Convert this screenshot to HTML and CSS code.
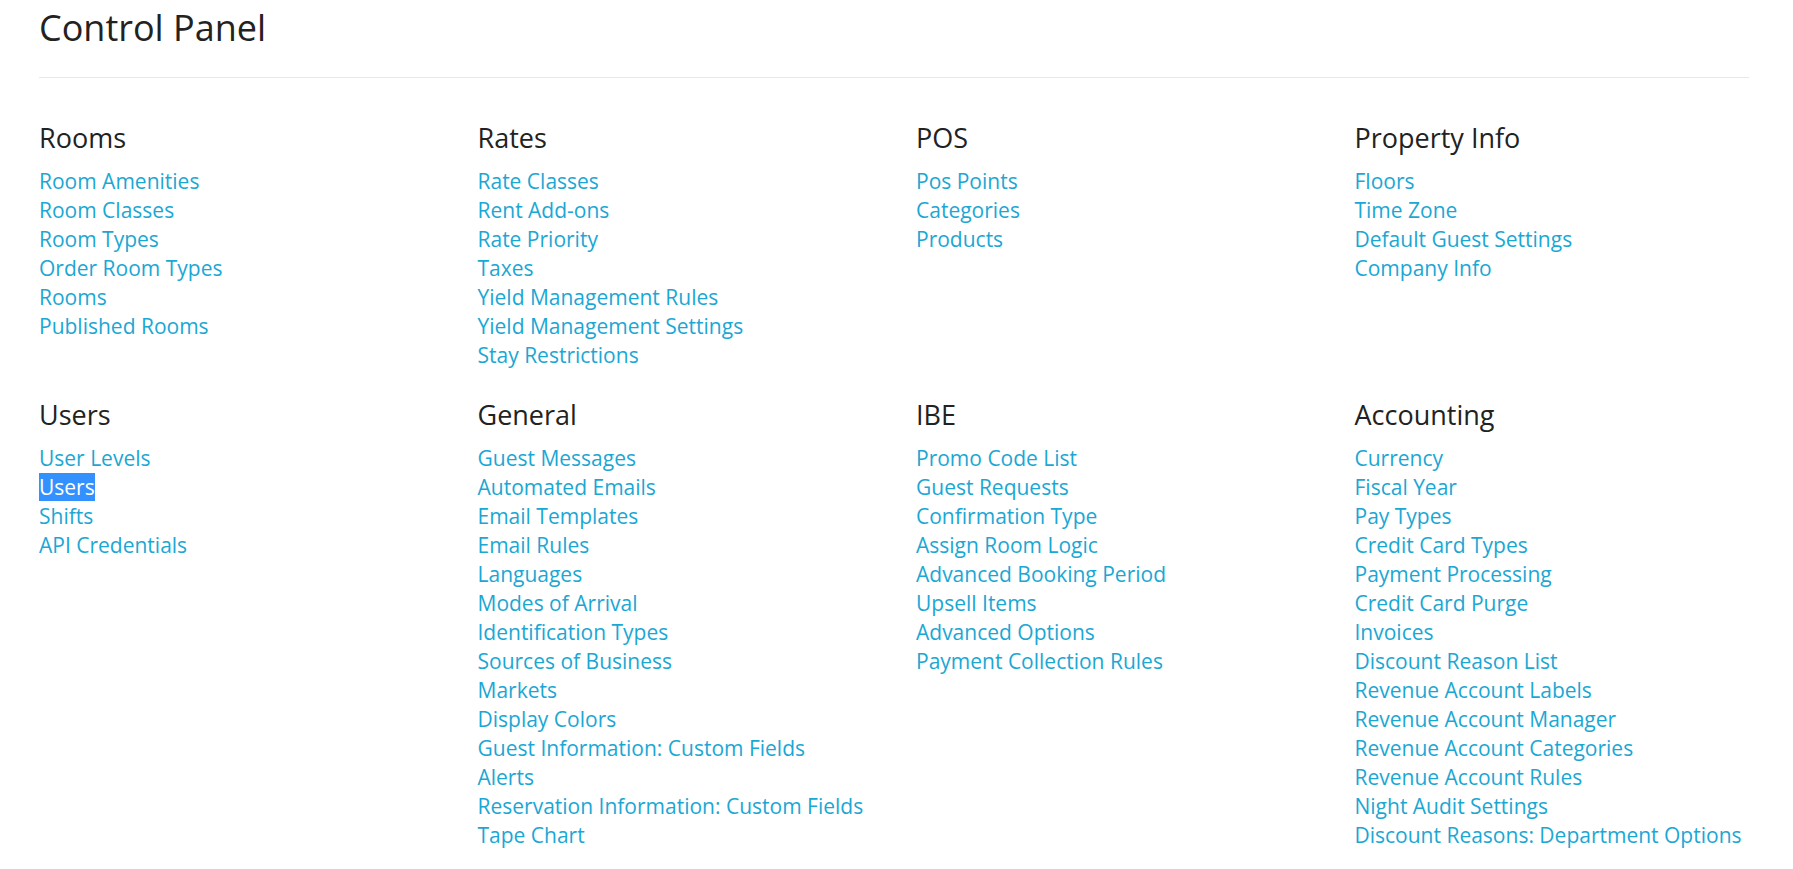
FILE: index.html
```html
<!DOCTYPE html>
<html lang="en">
<head>
<meta charset="utf-8">
<title>Control Panel</title>
<link rel="stylesheet" href="styles.css">
</head>
<body>
<div class="page">
  <h1 class="title">Control Panel</h1>
  <hr class="divider">
  <div class="grid">
    <section class="group">
      <h3 class="group-title">Rooms</h3>
      <ul class="links">
        <li><a href="#">Room Amenities</a></li>
        <li><a href="#">Room Classes</a></li>
        <li><a href="#">Room Types</a></li>
        <li><a href="#">Order Room Types</a></li>
        <li><a href="#">Rooms</a></li>
        <li><a href="#">Published Rooms</a></li>
      </ul>
    </section>
    <section class="group">
      <h3 class="group-title">Rates</h3>
      <ul class="links">
        <li><a href="#">Rate Classes</a></li>
        <li><a href="#">Rent Add-ons</a></li>
        <li><a href="#">Rate Priority</a></li>
        <li><a href="#">Taxes</a></li>
        <li><a href="#">Yield Management Rules</a></li>
        <li><a href="#">Yield Management Settings</a></li>
        <li><a href="#">Stay Restrictions</a></li>
      </ul>
    </section>
    <section class="group">
      <h3 class="group-title">POS</h3>
      <ul class="links">
        <li><a href="#">Pos Points</a></li>
        <li><a href="#">Categories</a></li>
        <li><a href="#">Products</a></li>
      </ul>
    </section>
    <section class="group">
      <h3 class="group-title">Property Info</h3>
      <ul class="links">
        <li><a href="#">Floors</a></li>
        <li><a href="#">Time Zone</a></li>
        <li><a href="#">Default Guest Settings</a></li>
        <li><a href="#">Company Info</a></li>
      </ul>
    </section>
    <section class="group">
      <h3 class="group-title">Users</h3>
      <ul class="links">
        <li><a href="#">User Levels</a></li>
        <li><a href="#"><span class="selected">Users</span></a></li>
        <li><a href="#">Shifts</a></li>
        <li><a href="#">API Credentials</a></li>
      </ul>
    </section>
    <section class="group">
      <h3 class="group-title">General</h3>
      <ul class="links">
        <li><a href="#">Guest Messages</a></li>
        <li><a href="#">Automated Emails</a></li>
        <li><a href="#">Email Templates</a></li>
        <li><a href="#">Email Rules</a></li>
        <li><a href="#">Languages</a></li>
        <li><a href="#">Modes of Arrival</a></li>
        <li><a href="#">Identification Types</a></li>
        <li><a href="#">Sources of Business</a></li>
        <li><a href="#">Markets</a></li>
        <li><a href="#">Display Colors</a></li>
        <li><a href="#">Guest Information: Custom Fields</a></li>
        <li><a href="#">Alerts</a></li>
        <li><a href="#">Reservation Information: Custom Fields</a></li>
        <li><a href="#">Tape Chart</a></li>
      </ul>
    </section>
    <section class="group">
      <h3 class="group-title">IBE</h3>
      <ul class="links">
        <li><a href="#">Promo Code List</a></li>
        <li><a href="#">Guest Requests</a></li>
        <li><a href="#">Confirmation Type</a></li>
        <li><a href="#">Assign Room Logic</a></li>
        <li><a href="#">Advanced Booking Period</a></li>
        <li><a href="#">Upsell Items</a></li>
        <li><a href="#">Advanced Options</a></li>
        <li><a href="#">Payment Collection Rules</a></li>
      </ul>
    </section>
    <section class="group">
      <h3 class="group-title">Accounting</h3>
      <ul class="links">
        <li><a href="#">Currency</a></li>
        <li><a href="#">Fiscal Year</a></li>
        <li><a href="#">Pay Types</a></li>
        <li><a href="#">Credit Card Types</a></li>
        <li><a href="#">Payment Processing</a></li>
        <li><a href="#">Credit Card Purge</a></li>
        <li><a href="#">Invoices</a></li>
        <li><a href="#">Discount Reason List</a></li>
        <li><a href="#">Revenue Account Labels</a></li>
        <li><a href="#">Revenue Account Manager</a></li>
        <li><a href="#">Revenue Account Categories</a></li>
        <li><a href="#">Revenue Account Rules</a></li>
        <li><a href="#">Night Audit Settings</a></li>
        <li><a href="#">Discount Reasons: Department Options</a></li>
      </ul>
    </section>
  </div>
</div>
</body>
</html>
```

FILE: styles.css
```css
html, body {
  margin: 0;
  padding: 0;
  background: #ffffff;
}

body {
  font-family: "Open Sans", "Liberation Sans", sans-serif;
  color: #222222;
  overflow: hidden;
}

.page {
  padding: 8px 0 0 39px;
}

.title {
  margin: 0;
  font-size: 36px;
  line-height: 40px;
  font-weight: 400;
  color: #222222;
}

.divider {
  width: 1710px;
  margin: 29px 0 0 0;
  border: 0;
  border-top: 1px solid #e8e8e8;
  height: 0;
}

.grid {
  display: grid;
  grid-template-columns: repeat(4, 409px);
  column-gap: 29.5px;
  row-gap: 30px;
  margin-top: 45px;
}

.group-title {
  margin: 0 0 14px 0;
  font-size: 27px;
  line-height: 30px;
  font-weight: 400;
  color: #222222;
}

.links {
  list-style: none;
  margin: 0;
  padding: 0;
}

.links li {
  font-size: 21px;
  line-height: 29px;
  white-space: nowrap;
}

.links a {
  color: #1ba7d4;
  text-decoration: none;
}

.selected {
  background: #3390ff;
  color: #ffffff;
}
```
